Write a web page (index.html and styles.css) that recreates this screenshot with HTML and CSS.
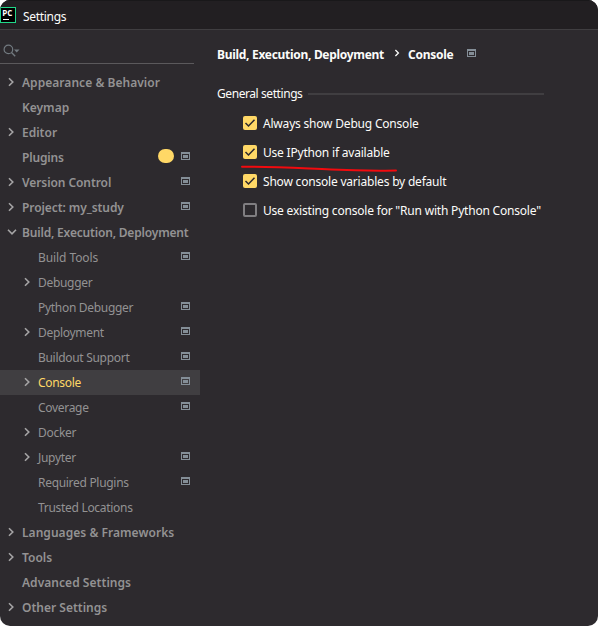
FILE: index.html
```html
<!DOCTYPE html>
<html lang="en">
<head>
<meta charset="utf-8">
<title>Settings</title>
<link rel="stylesheet" href="styles.css">
</head>
<body>
<svg class="symbols" aria-hidden="true">
  <symbol id="right" viewBox="0 0 8 10"><path d="M2 1.2 5.8 5 2 8.8" fill="none" stroke="currentColor" stroke-width="1.6"/></symbol>
  <symbol id="down" viewBox="0 0 10 8"><path d="M1 1.8 5 5.8 9 1.8" fill="none" stroke="currentColor" stroke-width="1.6"/></symbol>
  <symbol id="scope" viewBox="0 0 9 8"><path fill="currentColor" fill-rule="evenodd" d="M0 0h9v8H0zM1 2v5h7V2zM2 3h5v3H2z"/></symbol>
  <symbol id="check" viewBox="0 0 14 14"><path d="m2.5 7 3 3 6-6.3" fill="none" stroke="#2d2a2e" stroke-width="1.5"/></symbol>
</svg>
<div class="window">
  <header class="titlebar">
    <svg class="logo" viewBox="0 0 16 16"><rect width="16" height="16" fill="#21d789"/><rect x="1" y="1" width="14" height="14" fill="#000"/><text x="2.3" y="9" class="logo-text">PC</text><path d="M3 12.5h6" stroke="#fff"/></svg>
    <span>Settings</span>
  </header>
  <div class="body">
    <aside class="sidebar">
      <div class="search">
        <svg width="18" height="14" viewBox="0 0 18 14"><circle cx="5.4" cy="5.4" r="4.3" fill="none" stroke="#727a80" stroke-width="1.2"/><path d="m8.5 8.5 3.7 3.7" stroke="#727a80" stroke-width="1.4"/><path d="M11 5.4h5.5L13.7 8.4z" fill="#727a80"/></svg>
      </div>
      <nav class="tree">
        <div class="row"><svg class="arrow"><use href="#right"/></svg><span class="loose">Appearance &amp; Behavior</span></div>
        <div class="row"><i class="arrow"></i><span>Keymap</span></div>
        <div class="row"><svg class="arrow"><use href="#right"/></svg><span>Editor</span></div>
        <div class="row"><i class="arrow"></i><span class="snug">Plugins</span><b class="badge"></b><svg class="scope"><use href="#scope"/></svg></div>
        <div class="row"><svg class="arrow"><use href="#right"/></svg><span class="near">Version Control</span><svg class="scope"><use href="#scope"/></svg></div>
        <div class="row"><svg class="arrow"><use href="#right"/></svg><span class="near">Project: my_study</span><svg class="scope"><use href="#scope"/></svg></div>
        <div class="row"><svg class="arrow open"><use href="#down"/></svg><span class="snug">Build, Execution, Deployment</span></div>
        <div class="row child"><i class="arrow"></i><span class="near">Build Tools</span><svg class="scope"><use href="#scope"/></svg></div>
        <div class="row child"><svg class="arrow"><use href="#right"/></svg><span>Debugger</span></div>
        <div class="row child"><i class="arrow"></i><span>Python Debugger</span><svg class="scope"><use href="#scope"/></svg></div>
        <div class="row child"><svg class="arrow"><use href="#right"/></svg><span>Deployment</span><svg class="scope"><use href="#scope"/></svg></div>
        <div class="row child"><i class="arrow"></i><span>Buildout Support</span><svg class="scope"><use href="#scope"/></svg></div>
        <div class="row child selected"><svg class="arrow"><use href="#right"/></svg><span>Console</span><svg class="scope"><use href="#scope"/></svg></div>
        <div class="row child"><i class="arrow"></i><span>Coverage</span><svg class="scope"><use href="#scope"/></svg></div>
        <div class="row child"><svg class="arrow"><use href="#right"/></svg><span>Docker</span></div>
        <div class="row child"><svg class="arrow"><use href="#right"/></svg><span>Jupyter</span><svg class="scope"><use href="#scope"/></svg></div>
        <div class="row child"><i class="arrow"></i><span>Required Plugins</span><svg class="scope"><use href="#scope"/></svg></div>
        <div class="row child"><i class="arrow"></i><span>Trusted Locations</span></div>
        <div class="row"><svg class="arrow"><use href="#right"/></svg><span class="loose">Languages &amp; Frameworks</span></div>
        <div class="row"><svg class="arrow"><use href="#right"/></svg><span>Tools</span></div>
        <div class="row"><i class="arrow"></i><span class="loose">Advanced Settings</span></div>
        <div class="row"><svg class="arrow"><use href="#right"/></svg><span>Other Settings</span></div>
      </nav>
    </aside>
    <main class="content">
      <div class="crumbs"><span class="crumb-parent">Build, Execution, Deployment</span><svg class="crumb-arrow"><use href="#right"/></svg><span class="crumb-current">Console</span><svg class="scope"><use href="#scope"/></svg></div>
      <div class="section"><span>General settings</span><hr></div>
      <div class="options">
        <div class="option"><svg class="box on"><use href="#check"/></svg><span>Always show Debug Console</span></div>
        <div class="option"><svg class="box on"><use href="#check"/></svg><span>Use IPython if available</span>
          <svg class="underline" viewBox="0 0 158 8"><path d="M1 1.8 C30 1.2 58 3.2 90 4.6 S135 5.6 155 5.6" fill="none" stroke="#f20a0e" stroke-width="2" stroke-linecap="round"/></svg>
        </div>
        <div class="option"><svg class="box on"><use href="#check"/></svg><span>Show console variables by default</span></div>
        <div class="option"><i class="box"></i><span>Use existing console for "Run with Python Console"</span></div>
      </div>
    </main>
  </div>
</div>
</body>
</html>
```
FILE: styles.css
```css
* { box-sizing: border-box; }
body { margin: 0; background: #fff; font: 12px/25px "Noto Sans", sans-serif; }
.symbols { display: none; }
.window { width: 598px; height: 626px; overflow: hidden; background: #2d2a2e; border-radius: 10px; color: #fcfcfa; }
.titlebar { display: flex; align-items: center; height: 30px; gap: 7px; background: #221f22; border-bottom: 1px solid #403e41; padding-top: 2px; border-top: 1px solid #19181a; letter-spacing: -0.3px; }
.logo { width: 16px; height: 16px; margin-top: -3px; }
.logo-text { font: bold 8px "Open Sans", sans-serif; letter-spacing: 0; fill: #fff; }
.body { display: flex; }
.sidebar { width: 200px; flex: none; }
.search { height: 34px; width: 194px; border-bottom: 1px solid #5b595c; padding: 14px 0 0 3px; line-height: 0; }
.tree { padding-top: 6px; color: #939293; }
.row { display: flex; align-items: center; height: 25px; padding: 0 10px 0 7px; font-weight: 600; white-space: nowrap; }
.row span { flex: 1; }
.row .snug { letter-spacing: -0.18px; }
.row .near { letter-spacing: -0.08px; }
.row .loose { letter-spacing: 0.04px; }
.row.child { padding-left: 23px; font-weight: 400; letter-spacing: -0.3px; }
.arrow { width: 8px; height: 10px; flex: none; margin: -2px 7px 0 0; color: #a5a4a5; }
.arrow.open { width: 10px; height: 8px; margin: -2px 5px 0 0; }
.scope { width: 9px; height: 8px; flex: none; color: #848e97; margin-top: -3px; }
.badge { width: 16px; height: 14px; border-radius: 7px; background: #ffd866; margin: -3px 7px 0 0; }
.selected { background: #403e41; }
.selected span { color: #ffd866; }
.content { padding: 11px 0 0 17px; }
.crumbs { display: flex; align-items: center; height: 26px; font-weight: 700; }
.crumb-parent { width: 167px; letter-spacing: -0.3px; white-space: nowrap; }
.crumb-arrow { width: 8px; height: 8px; margin: -2px 7px 0 9px; }
.crumb-current { width: 46px; letter-spacing: -0.25px; }
.crumbs .scope { margin: -2px 0 0 13px; }
.section { display: flex; align-items: center; width: 327px; margin-top: 14px; gap: 6px; }
.section span { width: 85px; letter-spacing: -0.42px; white-space: nowrap; }
.section hr { flex: 1; border: 0; height: 2px; margin: 0; background: #403e41; }
.options { padding: 3px 0 0 26px; letter-spacing: -0.2px; }
.option { display: flex; align-items: center; position: relative; height: 29px; gap: 6px; white-space: nowrap; }
.box { width: 14px; height: 14px; flex: none; border: 2px solid #807e81; border-radius: 2px; margin-top: -1px; }
.box.on { border: 0; background: #ffd866; }
.underline { position: absolute; left: -2px; top: 27px; width: 158px; height: 8px; z-index: 1; }
```
